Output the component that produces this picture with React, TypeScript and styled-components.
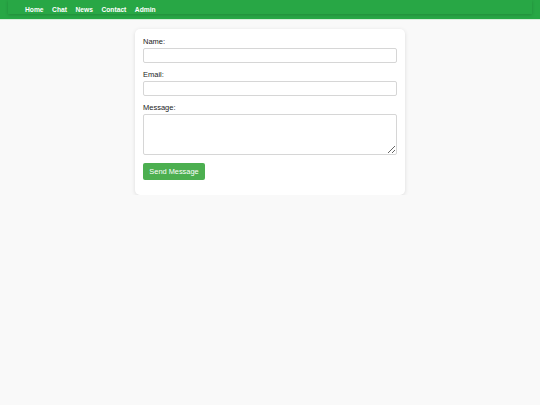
import styled, { createGlobalStyle } from 'styled-components'

const GlobalStyle = createGlobalStyle`
  body {
    margin: 0;
    background: #f9f9f9;
    font-family: "Liberation Sans", Arial, sans-serif;
  }
`

const Nav = styled.nav`
  height: 20px;
  background: #28a745;
  border-bottom: 1px solid #d8efdc;
  box-sizing: border-box;
`

const Menu = styled.ul`
  display: flex;
  gap: 8.5px;
  height: 11px;
  margin: 0 8px;
  padding: 3px 0 0 17px;
  list-style: none;
  line-height: 8px;
  background: #28a745;
  box-shadow: 0 1px 3px rgba(0, 0, 0, 0.18);
  box-sizing: content-box;
`

const MenuLink = styled.a`
  color: #fff;
  font-size: 6.7px;
  font-weight: bold;
  text-decoration: none;
`

const Card = styled.form`
  width: 270px;
  box-sizing: border-box;
  margin: 9px auto 0;
  padding: 9px 8px 15px;
  background: #fff;
  border-radius: 5px;
  box-shadow: 0 1px 4px rgba(0, 0, 0, 0.12);
`

const Field = styled.div`
  display: flex;
  flex-direction: column;
  margin-bottom: 8px;
`

const Label = styled.label`
  font-size: 7.5px;
  line-height: 8px;
  color: #222;
  margin-bottom: 2px;
`

const Input = styled.input`
  height: 15px;
  box-sizing: border-box;
  border: 1px solid #d6d6d6;
  border-radius: 2px;
  padding: 0 4px;
  font: inherit;
  font-size: 7.5px;
  outline: none;
`

const TextArea = styled.textarea`
  height: 41px;
  box-sizing: border-box;
  border: 1px solid #d6d6d6;
  border-radius: 2px;
  padding: 3px 4px;
  font: inherit;
  font-size: 7.5px;
  outline: none;
`

const Button = styled.button`
  display: block;
  width: 62px;
  height: 17px;
  padding: 0;
  border: none;
  border-radius: 2px;
  background: #4caf50;
  color: #fff;
  font-family: inherit;
  font-size: 7.4px;
  cursor: pointer;
`

const links = ['Home', 'Chat', 'News', 'Contact', 'Admin']

export default function App() {
  return (
    <>
      <GlobalStyle />
      <Nav>
        <Menu>
          {links.map(l => (
            <li key={l}>
              <MenuLink href="#">{l}</MenuLink>
            </li>
          ))}
        </Menu>
      </Nav>
      <Card onSubmit={e => e.preventDefault()}>
        <Field>
          <Label htmlFor="name">Name:</Label>
          <Input id="name" type="text" />
        </Field>
        <Field>
          <Label htmlFor="email">Email:</Label>
          <Input id="email" type="email" />
        </Field>
        <Field>
          <Label htmlFor="message">Message:</Label>
          <TextArea id="message" />
        </Field>
        <Button type="submit">Send Message</Button>
      </Card>
    </>
  )
}
